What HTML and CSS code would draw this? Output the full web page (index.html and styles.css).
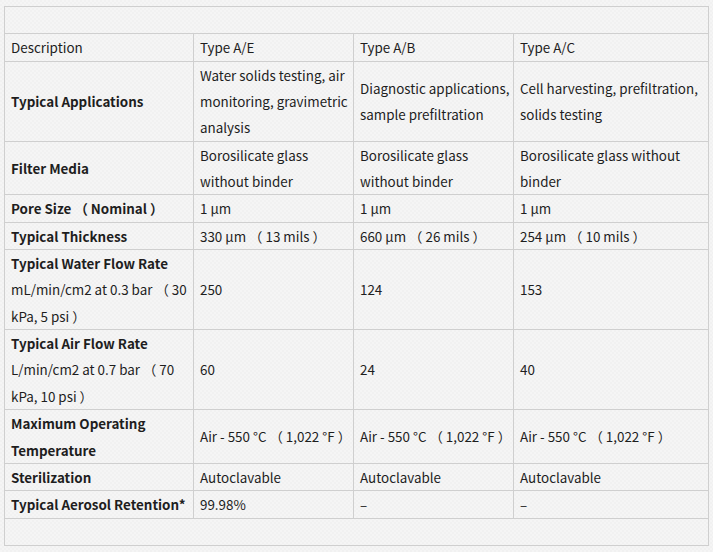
FILE: index.html
```html
<!DOCTYPE html>
<html>
<head>
<meta charset="utf-8">
<link rel="stylesheet" href="styles.css">
</head>
<body>
<table class="spec">
  <colgroup>
    <col class="c1"><col class="c2"><col class="c3"><col class="c4">
  </colgroup>
  <tbody>
    <tr class="blank"><td colspan="4">&nbsp;</td></tr>
    <tr><td>Description</td><td>Type A/E</td><td>Type A/B</td><td>Type A/C</td></tr>
    <tr><th>Typical Applications</th><td>Water solids testing, air monitoring, gravimetric analysis</td><td>Diagnostic applications, sample prefiltration</td><td>Cell harvesting, prefiltration, solids testing</td></tr>
    <tr><th>Filter Media</th><td>Borosilicate glass without binder</td><td>Borosilicate glass without binder</td><td>Borosilicate glass without binder</td></tr>
    <tr><th>Pore Size （ Nominal ）</th><td>1 µm</td><td>1 µm</td><td>1 µm</td></tr>
    <tr><th>Typical Thickness</th><td>330 µm （ 13 mils ）</td><td>660 µm （ 26 mils ）</td><td>254 µm （ 10 mils ）</td></tr>
    <tr><th>Typical Water Flow Rate<br><span class="sub">mL/min/cm2 at 0.3 bar （ 30 kPa, 5 psi ）</span></th><td>250</td><td>124</td><td>153</td></tr>
    <tr><th>Typical Air Flow Rate<br><span class="sub">L/min/cm2 at 0.7 bar （ 70 kPa, 10 psi ）</span></th><td>60</td><td>24</td><td>40</td></tr>
    <tr><th>Maximum Operating Temperature</th><td>Air - 550 °C （ 1,022 °F ）</td><td>Air - 550 °C （ 1,022 °F ）</td><td>Air - 550 °C （ 1,022 °F ）</td></tr>
    <tr><th>Sterilization</th><td>Autoclavable</td><td>Autoclavable</td><td>Autoclavable</td></tr>
    <tr><th>Typical Aerosol Retention*</th><td>99.98%</td><td>–</td><td>–</td></tr>
    <tr class="blank"><td colspan="4">&nbsp;</td></tr>
  </tbody>
</table>
</body>
</html>
```

FILE: styles.css
```css
html, body {
  margin: 0;
  background-color: #f3f3f3;
  background-image: repeating-conic-gradient(#f5f5f5 0 25%, #f1f1f1 0 50%);
  background-size: 4px 4px;
}
body {
  padding: 6px 5px 0 4px;
  font-family: "Noto Sans CJK SC", "Noto Sans", sans-serif;
  font-size: 13.4px;
  color: #1e1e1e;
}
.spec {
  border-collapse: collapse;
  table-layout: fixed;
  width: 704px;
  border: 1px solid #cfcfcf;
}
.c1 { width: 189px; }
.c2 { width: 160px; }
.c3 { width: 160px; }
.c4 { width: 195px; }
.spec td, .spec th {
  border: 1px solid #cfcfcf;
  padding: 0 0 0 6px;
  line-height: 26.35px;
  text-align: left;
  vertical-align: middle;
  font-weight: normal;
}
.spec th {
  font-weight: bold;
}
.spec .sub {
  font-weight: normal;
}
```
